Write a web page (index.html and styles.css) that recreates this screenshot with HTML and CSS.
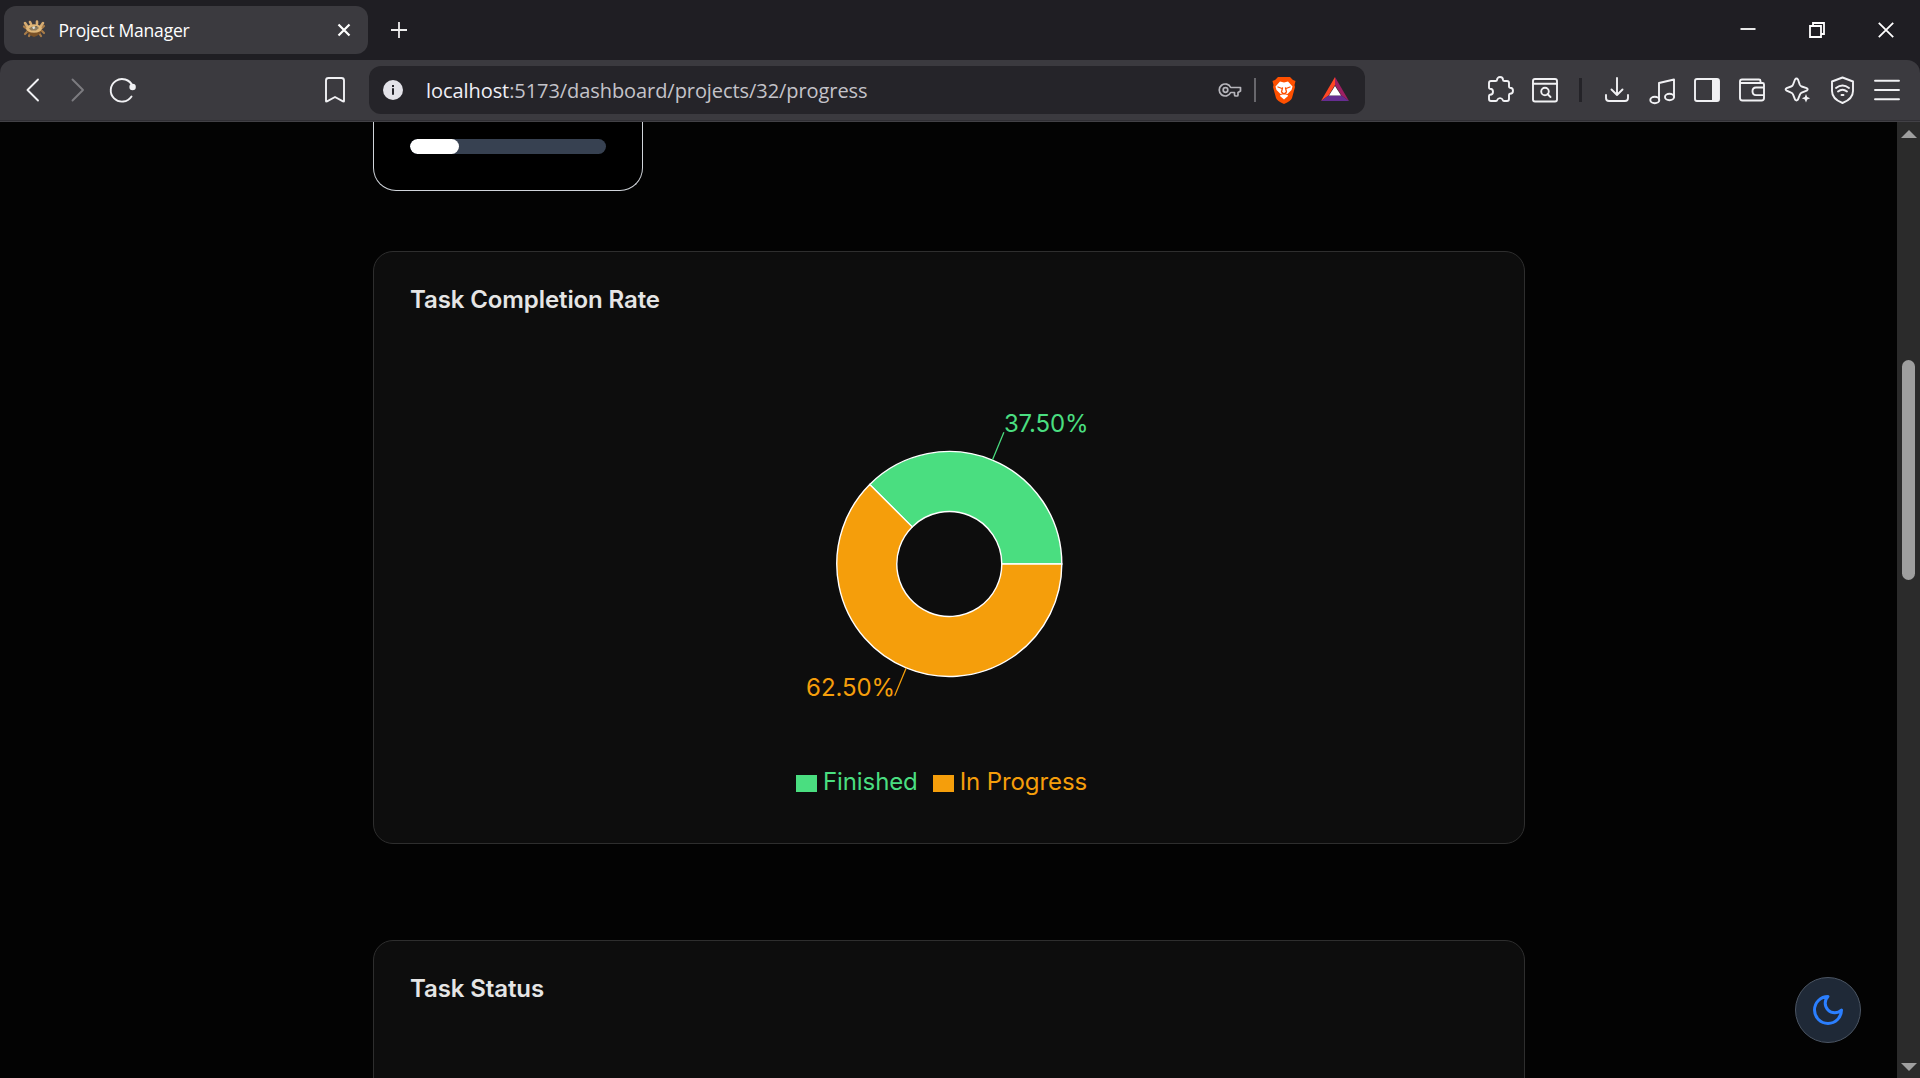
FILE: index.html
```html
<!DOCTYPE html>
<html lang="en">
<head>
<meta charset="utf-8">
<title>Project Manager</title>
<link rel="stylesheet" href="styles.css">
</head>
<body>
<div class="window">
  <header class="tabstrip">
    <div class="tab">
      <svg class="favicon" width="24" height="20" viewBox="0 0 24 20">
        <g fill="none" stroke="#a97c48" stroke-width="2.200" stroke-linecap="round"><path d="M4 9 2 7.500M5 13l-2 2M8 15l-1 2M20 9l2-2M20 12l2 2M17 14l2 3"/></g>
        <g fill="none" stroke="#d6ac72" stroke-width="2.600" stroke-linecap="round"><path d="M5 7 3 4M9 5 8 3M15 5V2.500M19 7l2-3"/></g>
        <path d="M4 10q8 7 16 0-1 6-8 8-6-2-8-8Z" fill="#7b5227"/>
        <ellipse cx="12" cy="9.500" rx="8" ry="4.300" fill="#e0b778"/>
        <path d="m7 9.500 3-2 2 1 3-1.500 2 2-3 2.500H9z" fill="#8c7b5e"/>
        <path d="m10 8.500 2-1 1.500 1.500-2 1.300z" fill="#d9e0dc"/>
        <path d="m13 7 2 .5-1 1z" fill="#3c4a50"/>
      </svg>
      <span class="tab-title">Project Manager</span>
      <svg class="tab-close" width="14" height="14" viewBox="0 0 14 14"><path d="m1.500 1.500 11 11m0-11-11 11"/></svg>
    </div>
    <svg class="new-tab" width="18" height="18" viewBox="0 0 18 18"><path d="M9 1v16M1 9h16"/></svg>
    <div class="window-controls">
      <svg width="16" height="16" viewBox="0 0 16 16"><path d="M.5 7h15"/></svg>
      <svg width="16" height="16" viewBox="0 0 16 16"><path d="M1 4h11v11H1zM4 4V1h11v11h-3"/></svg>
      <svg width="16" height="16" viewBox="0 0 16 16"><path d="m.8.8 14.400 14.400m0-14.400L.8 15.200"/></svg>
    </div>
  </header>
  <div class="toolbar-back">
  <nav class="toolbar">
    <div class="nav-buttons">
      <svg width="30" height="30" viewBox="0 0 30 30"><path d="M20 4.500 9.500 15 20 25.500"/></svg>
      <svg class="muted" width="30" height="30" viewBox="0 0 30 30"><path d="M9.500 4.500 20 15 9.500 25.500"/></svg>
      <svg width="30" height="30" viewBox="0 0 30 30"><path d="M24.500 11A11.300 11.300 0 1 0 23.500 21.500"/><circle class="fill" cx="24.600" cy="12" r="3.200"/></svg>
    </div>
    <svg class="bookmark" width="30" height="30" viewBox="0 0 30 30"><path d="M6 26V5.500Q6 3 8.500 3h13Q24 3 24 5.500V26q0 1-1 .3L15 22l-8 4.300q-1 .7-1-.3Z"/></svg>
    <div class="address">
      <svg class="info" width="20" height="20" viewBox="0 0 20 20"><circle cx="10" cy="10" r="10"/><path d="M9 8.300h2v6.500H9zM9 5h2v2H9z"/></svg>
      <span class="url"><b>localhost</b>:5173/dashboard/projects/32/progress</span>
      <svg class="key" width="24" height="16" viewBox="0 0 24 16"><path d="M12.700 5.500A6 6 0 1 0 12.700 10.500H16.500V13q0 1 1.500 1h1q1 0 1-1v-2.500l2.500-1.500V5.500Z"/><circle cx="7.500" cy="8" r="2.300"/></svg>
      <span class="divider"></span>
      <svg class="lion" width="24" height="28" viewBox="0 0 24 28">
        <path fill="#ff5000" d="M6 1h12l3 3 2.500 1-1 4 .5 2-3 11q-1 3-8 6-7-3-8-6L1 11l.5-2-1-4L3 4z"/>
        <path fill="#fff" d="M8 5.500 12 6.500l4-1 4.500 5-1 3.500-4 4 .5 2L12 23.500 8 20l.5-2-4-4-1-3.500z"/>
        <path fill="none" stroke="#ff5000" stroke-width="1.300" d="m6 11 4 1.500m8-1.500-4 1.500m-3.500-.5-1 4 2.500 2 2.500-2-1-4M8.500 18.500 12 17.500l3.500 1"/>
      </svg>
      <svg class="bat" width="28" height="24" viewBox="0 0 28 24"><path fill="#ff4724" d="M14 0 0 24l7.500-5.500L14 8z"/><path fill="#9e1f63" d="M14 0v8l6.500 10.500L28 24z"/><path fill="#662d91" d="M0 24h28l-7.500-5.500h-13z"/><path fill="#fff" d="m14 9 6 9.500H8z"/></svg>
    </div>
    <div class="actions">
      <svg width="30" height="30" viewBox="0 0 30 30"><path d="M6 6h4.500q1.500 0 1.500-1a3 3 0 0 1 6 0q0 1 1.500 1H22q2 0 2 2v3.500q0 1 1 1.200a3 3 0 0 1 0 6q-1 .2-1 1.300V24q0 2-2 2h-3q-1 0-1.200-1a3 3 0 0 0-5.600 0q-.2 1-1.200 1H6q-2 0-2-2v-3q0-1 1-1.200a3 3 0 0 0 0-6Q4 13.600 4 12.500V8q0-2 2-2Z"/></svg>
      <svg width="30" height="30" viewBox="0 0 30 30"><rect x="3" y="4" width="24" height="22.500" rx="2"/><path d="M3 8.800h24"/><circle cx="15" cy="16.500" r="3.800"/><path d="m17.500 19 3 3"/></svg>
      <span class="separator"></span>
      <svg width="30" height="30" viewBox="0 0 30 30"><path d="M15 3v17m-5.500-5.500L15 20l5.500-5.500M4 20v3q0 3 3 3h16q3 0 3-3v-3"/></svg>
      <svg width="30" height="30" viewBox="0 0 30 30"><path d="M12 24.500V8L27 4.500V22"/><ellipse cx="7.800" cy="25" rx="4.500" ry="3.200"/><ellipse cx="22.500" cy="22" rx="4.500" ry="3.200"/></svg>
      <svg width="30" height="30" viewBox="0 0 30 30"><rect x="3" y="4" width="24" height="22" rx="2"/><path class="fill" d="M20 4h6l1 1v20l-1 1h-6z"/></svg>
      <svg width="30" height="30" viewBox="0 0 30 30"><path d="M27 12V9.500q0-1.500-1.500-1.500H3M23.500 8V6q0-1.500-1.500-1.500H5Q3 4.500 3 6.500V23q0 2.500 2.500 2.500h19q2.500 0 2.500-2.500V12.500h-8q-3.500 0-3.500 3.800t3.500 3.800h8"/></svg>
      <svg width="30" height="30" viewBox="0 0 30 30"><path d="M13 4.500q1.500-2 3 0l1.700 5q.6 1.500 2 2l5 1.700q2 1 0 2.500l-5 2q-1.300.5-1.800 2l-2 5q-1.400 1.600-2.800 0l-2-5q-.5-1.500-2-2l-4.500-2q-2-1.500 0-2.500l4.500-1.700q1.500-.5 2-2z"/><path class="fill" d="m24 19 1.200 3 3 1.200-3 1.200-1.200 3-1.200-3-3-1.200 3-1.200z"/></svg>
      <svg width="30" height="30" viewBox="0 0 30 30"><path d="m15.500 2.500 10.500 4v9.500q0 8-10.500 12Q5 24 5 16V6.500z"/><path d="M9 13q6.500-5 13 0m-11 3.500q4.500-3.500 9 0"/><path d="M14.500 20h2"/></svg>
      <svg width="30" height="30" viewBox="0 0 30 30"><path d="M3 5.800h24M3 15h24M3 24.200h24"/></svg>
    </div>
  </nav>
  </div>
  <div class="viewport">
    <main class="page">
      <section class="summary-card"><div class="progress"><div class="progress-value" style="width:25%"></div></div></section>
      <section class="card">
        <h2>Task Completion Rate</h2>
        <svg class="chart" width="1078" height="380" viewBox="0 0 1078 380">
          <g stroke="#fff" stroke-width="1.400" transform="translate(539.300 231)">
            <path fill="#4ade80" d="M112.500 0A112.500 112.500 0 0 0-79.550-79.550L-37.120-37.120A52.500 52.500 0 0 1 52.500 0Z"/>
            <path fill="#f59e0b" d="M-79.550-79.550A112.500 112.500 0 1 0 112.500 0H52.500A52.500 52.500 0 1 1-37.120-37.120Z"/>
          </g>
          <path d="m582.400 127.100 11.500-27.800" stroke="#4ade80" stroke-width="1.250"/>
          <path d="m496.200 334.900-11.500 27.800" stroke="#f59e0b" stroke-width="1.250"/>
          <text x="593.900" y="99.300" fill="#4ade80">37.50%</text>
          <text x="484.900" y="363" fill="#f59e0b" text-anchor="end">62.50%</text>
        </svg>
        <ul class="legend"><li class="finished">Finished</li><li class="in-progress">In Progress</li></ul>
      </section>
      <section class="card"><h2>Task Status</h2></section>
    </main>
    <aside class="scrollbar">
      <svg width="16" height="8" viewBox="0 0 16 8"><path d="M8 0l8 8H0z"/></svg>
      <div class="thumb"></div>
      <svg class="down" width="16" height="8" viewBox="0 0 16 8"><path d="M0 0h16L8 8z"/></svg>
    </aside>
    <button class="theme-toggle" aria-label="Toggle theme"><svg width="36" height="36" viewBox="0 0 24 24"><path d="M12 3a6 6 0 0 0 9 9 9 9 0 1 1-9-9Z"/></svg></button>
  </div>
</div>
</body>
</html>
```
FILE: styles.css
```css
* { box-sizing: border-box; }
body { margin: 0; background: #030303; overflow: hidden; font-family: Inter, sans-serif; }
svg { display: block; flex: none; }
.window { height: 1078px; display: flex; flex-direction: column; }

/* Tab strip */
.tabstrip { height: 60px; flex: none; display: flex; align-items: center; padding: 0 15px 0 4px; background: #1f1e23; }
.tab { width: 364px; height: 48px; display: flex; align-items: center; padding: 0 17px 0 18px; border-radius: 12px; background: #3b3a3f; }
.favicon { margin-bottom: 2px; }
.tab-title { flex: 1; margin-left: 12.500px; padding-bottom: 1px; color: #fff; font: 17.500px/24px "Open Sans", sans-serif; letter-spacing: -.2px; }
.tab-close { fill: none; stroke: #fff; stroke-width: 2.200; }
.new-tab { margin-left: 22px; fill: none; stroke: #eee; stroke-width: 1.800; }
.window-controls { display: flex; gap: 53px; margin-left: auto; margin-right: 11.500px; padding-bottom: 1px; fill: none; stroke: #fff; stroke-width: 1.800; }

/* Toolbar */
.toolbar-back { flex: none; background: #1f1e23; }
.toolbar { height: 62px; display: flex; align-items: center; padding: 0 18px 2px; border-radius: 13px 13px 0 0; background: #3b3a3f; border-bottom: 1px solid #424146; box-shadow: inset 0 -1px #302f34; }
.nav-buttons { display: flex; gap: 15px; }
.toolbar svg { stroke-linecap: round; stroke-linejoin: round; }
.nav-buttons svg, .bookmark, .actions svg { fill: none; stroke: #f1f1f4; stroke-width: 1.900; }
.nav-buttons .muted { stroke: #7c7b80; }
.toolbar .fill { fill: #f1f1f4; stroke: none; }
.bookmark { margin-left: 182px; }
.address { width: 996px; height: 48px; margin-left: 19px; display: flex; align-items: center; padding: 0 16px 0 14px; border-radius: 12px; background: #252429; }
.info { fill: #e3e2e8; }
.info path { fill: #252429; }
.url { flex: 1; margin-left: 23px; padding-top: 2px; color: #c4c3c9; font: 20px/28px "Open Sans", sans-serif; letter-spacing: -.07px; white-space: nowrap; }
.url b { font-weight: 400; color: #f0eff5; }
.key { fill: none; stroke: #b6b5bb; stroke-width: 1.700; }
.divider { width: 2px; height: 24px; margin: 0 16px 0 12px; background: #68676c; }
.bat { margin-left: 25px; margin-bottom: 2px; }
.actions { display: flex; align-items: center; gap: 15px; margin-left: auto; }
.separator { width: 3px; height: 24px; margin: 0 5px 0 4px; background: #242328; }

/* Page */
.viewport { flex: 1; min-height: 0; display: flex; position: relative; }
.page { flex: 1; overflow: hidden; padding-left: 373px; }
.summary-card { width: 270px; height: 69px; padding: 17px 36px 0; border: solid #d1d5db; border-width: 0 1px 1px; border-radius: 0 0 23px 23px; background: #000; }
.progress { height: 15px; border-radius: 8px; background: #374151; overflow: hidden; }
.progress-value { height: 100%; border-radius: 8px; background: #fff; }
.card { width: 1152px; height: 593px; margin-top: 60px; padding: 30px 36px; border: 1px solid #2e2e2e; border-radius: 20px; background: #0d0d0d; }
.card + .card { margin-top: 96px; }
.card h2 { margin: 0; color: #e5e5e5; font-size: 24px; line-height: 35px; font-weight: 600; letter-spacing: -.1px; }
.chart { margin-top: 16px; }
.chart text, .legend { font-size: 24px; letter-spacing: -.1px; }
.legend { display: flex; gap: 15px; list-style: none; margin: 52px 0 0 386px; padding: 0; line-height: 34px; }
.legend li { display: flex; align-items: center; gap: 6px; }
.legend li::before { content: ""; width: 21px; height: 17px; margin-top: 2px; background: currentColor; }
.finished { color: #4ade80; }
.in-progress { color: #f59e0b; }

/* Scrollbar */
.scrollbar { width: 23px; flex: none; display: flex; flex-direction: column; align-items: center; padding: 8px 0 7px; background: #2b2b2b; fill: #9f9f9f; }
.thumb { width: 13px; height: 220px; margin-top: 222px; border-radius: 7px; background: #9f9f9f; }
.scrollbar .down { margin-top: auto; }

.theme-toggle { position: absolute; right: 59px; bottom: 35px; width: 66px; height: 66px; display: grid; place-items: center; padding: 0; border: 1px solid #4b5563; border-radius: 50%; background: #1f2937; }
.theme-toggle svg { fill: none; stroke: #2b7fff; stroke-width: 2; stroke-linecap: round; stroke-linejoin: round; }
```
